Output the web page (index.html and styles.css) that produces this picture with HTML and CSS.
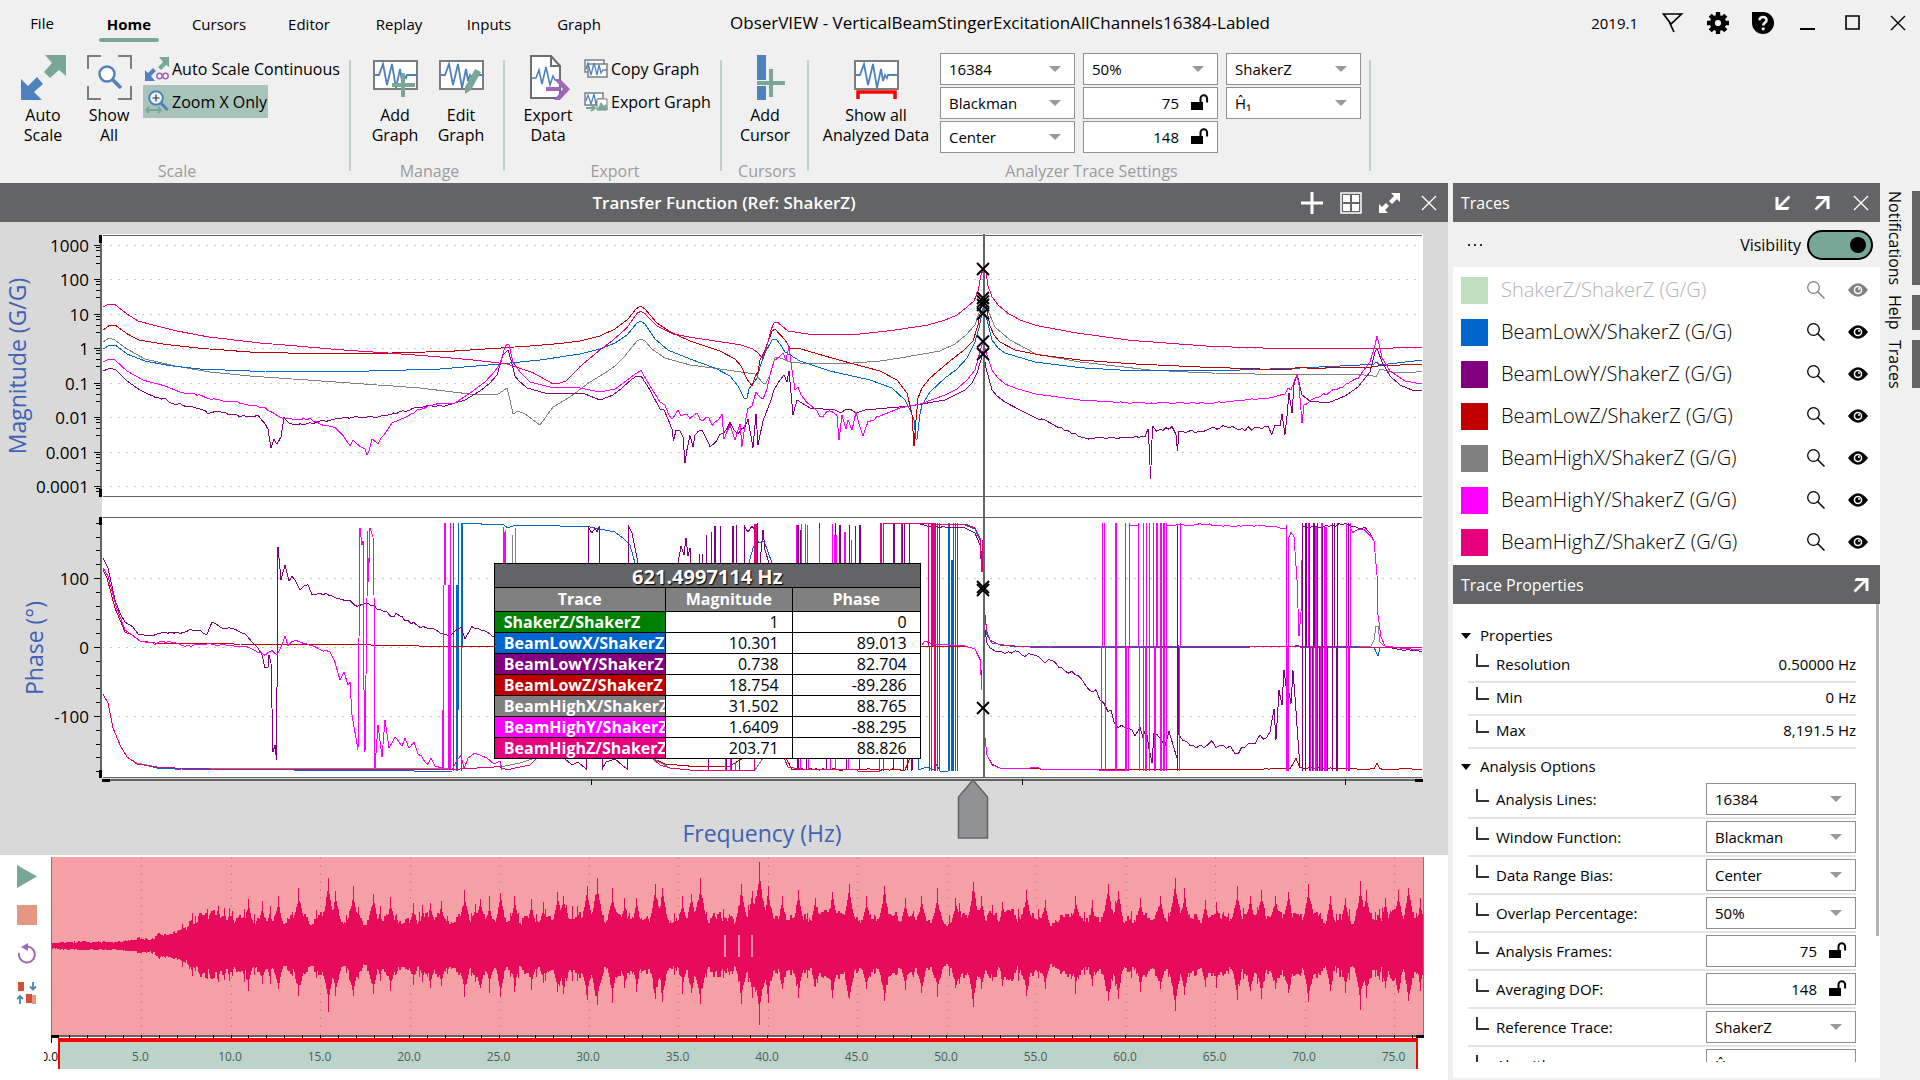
FILE: index.html
```html
<!DOCTYPE html>
<html lang="en">
<head>
<meta charset="utf-8">
<title>ObserVIEW - VerticalBeamStingerExcitationAllChannels16384-Labled</title>
<link rel="stylesheet" href="styles.css">
</head>
<body>
<svg class="symbols" aria-hidden="true">
  <symbol id="i-close" viewBox="0 0 16 16"><path d="M1 1 15 15M15 1 1 15" fill="none" stroke="currentColor" stroke-width="1.4"/></symbol>
  <symbol id="i-out" viewBox="0 0 16 16"><path d="M1.500 14.500 12.500 3.500" stroke="currentColor" stroke-width="2.600" fill="none"/><path d="M3 1h12.500v13h-3V4H1.500z" fill="currentColor"/></symbol>
  <symbol id="i-in" viewBox="0 0 16 16"><path d="M14.500 1.500 3.500 12.500" stroke="currentColor" stroke-width="2.600" fill="none"/><path d="M.5 2h3v10h11L13 15H.5z" fill="currentColor"/></symbol>
  <symbol id="i-search" viewBox="0 0 20 20"><circle cx="7.500" cy="7.500" r="5.800" fill="none" stroke="currentColor" stroke-width="1.300"/><path d="m11.500 11.500 7 7" stroke="currentColor" stroke-width="1.500"/></symbol>
  <symbol id="i-eye" viewBox="0 0 20 14"><path d="M0 7Q10-6.500 20 7 10 20.500 0 7z" fill="currentColor"/><circle cx="10" cy="7" r="4.300" fill="#fff"/><circle cx="10" cy="7" r="2.800" fill="currentColor"/><circle cx="11" cy="6" r="1" fill="#fff"/></symbol>
  <symbol id="i-lock" viewBox="0 0 18 17"><path d="M0 8h12v8H0z" fill="currentColor"/><path d="M9.500 8V4.500a3.300 3.300 0 0 1 6.600 0V8.500" fill="none" stroke="currentColor" stroke-width="2"/></symbol>
  <symbol id="i-wave" viewBox="0 0 45 30"><path d="M1 1h43v28H1z" fill="#fff" stroke="#7b7d80" stroke-width="2"/><path d="M2 15h4l4-11 4 21 5-21 4 24 4-19 2 12 2-6 2 3 1-3h10" fill="none" stroke="#4f81bd" stroke-width="1.800"/></symbol>
</svg>

<div class="app">
  <header class="ribbon">
    <div class="titlebar">
      <nav class="tabs">
        <button class="tab tab-file">File</button><button class="tab active">Home</button><button class="tab">Cursors</button><button class="tab">Editor</button><button class="tab">Replay</button><button class="tab">Inputs</button><button class="tab">Graph</button>
      </nav>
      <h1 class="title">ObserVIEW - VerticalBeamStingerExcitationAllChannels16384-Labled</h1>
      <div class="window-tools">
        <span class="version">2019.1</span>
        <button class="win" aria-label="Feedback"><svg width="22" height="20" viewBox="0 0 22 20"><path d="M1.500 1h18L9 11zM7.500 9.500 12 19" fill="none" stroke="#000" stroke-width="1.700"/></svg></button>
        <button class="win" aria-label="Settings"><svg width="22" height="22" viewBox="-11 -11 22 22"><circle r="5.600" fill="none" stroke="#000" stroke-width="5"/><g stroke="#000" stroke-width="4.400"><path d="M0-11v4M0 11V7M-11 0h4M11 0H7M-7.800-7.800-5-5M7.800 7.800 5 5M-7.800 7.800-5 5M7.800-7.800 5-5"/></g></svg></button>
        <button class="win" aria-label="Help"><svg width="22" height="22" viewBox="0 0 22 22"><path d="M0 0h11a11 11 0 1 1-11 11z"/><path d="M7.500 8.300c0-4.600 7.200-4.300 7 0-.1 2.500-3.300 2.500-3.300 5.200" fill="none" stroke="#f0f0f0" stroke-width="2.600"/><circle cx="11.200" cy="16.800" r="1.600" fill="#f0f0f0"/></svg></button>
        <button class="win" aria-label="Minimize"><svg width="16" height="16"><path d="M0 14h15" stroke="#000" stroke-width="2"/></svg></button>
        <button class="win" aria-label="Maximize"><svg width="16" height="16"><path d="M1 1h13v13H1z" fill="none" stroke="#000" stroke-width="1.600"/></svg></button>
        <button class="win" aria-label="Close"><svg width="16" height="16"><use href="#i-close"/></svg></button>
      </div>
    </div>

    <div class="groups">
      <section class="group g-scale">
        <div class="tools">
          <button class="big"><svg width="45" height="45" viewBox="0 0 45 45"><path d="M24 0h21v21l-7-6-9 8-6-6 8-9z" fill="#79a797"/><path d="M0 24l7 7 9-9 6 7-9 8 8 8H0z" fill="#4f81bd"/></svg><span>Auto<br>Scale</span></button>
          <button class="big"><svg width="45" height="45" viewBox="0 0 45 45"><path d="M1 14V1h13M31 1h13v13M44 31v13H31M14 44H1V31" fill="none" stroke="#7b7d80" stroke-width="2"/><circle cx="20" cy="19" r="7.500" fill="#fff" stroke="#4f81bd" stroke-width="2.400"/><path d="m25 24 9 9" stroke="#4f81bd" stroke-width="3.600"/></svg><span>Show<br>All</span></button>
          <div class="stack">
            <button class="small"><svg width="24" height="24" viewBox="0 0 24 24"><path d="M14 0h10v10l-3-2-5 5-3-3 5-5z" fill="#79a797"/><path d="M0 13l3 3 5-5 3 3-5 5 4 5H0z" fill="#4f81bd"/><circle cx="14.500" cy="19" r="2.700" fill="none" stroke="#a066b8" stroke-width="1.500"/><circle cx="20.500" cy="19" r="2.700" fill="none" stroke="#a066b8" stroke-width="1.500"/></svg>Auto Scale Continuous</button>
            <button class="small pressed"><svg width="24" height="24" viewBox="0 0 24 24"><circle cx="11" cy="8" r="6.800" fill="#eef4f8" stroke="#4f81bd" stroke-width="2"/><path d="M11 4.500v7M7.500 8h7" stroke="#333" stroke-width="1.200"/><path d="m16 13 6.500 7" stroke="#4f81bd" stroke-width="3"/><path d="M1 20h15M4 17l-3 3 3 3M13 17l3 3-3 3" fill="none" stroke="#79a797" stroke-width="1.800"/></svg>Zoom X Only</button>
          </div>
        </div>
        <h2>Scale</h2>
      </section>
      <section class="group g-manage">
        <div class="tools">
          <button class="big"><svg width="45" height="45" viewBox="0 0 45 45"><use href="#i-wave" y="5" width="45" height="30"/><path d="M30 18v24M19 30h23" stroke="#79a797" stroke-width="4"/></svg><span>Add<br>Graph</span></button>
          <button class="big"><svg width="45" height="45" viewBox="0 0 45 45"><use href="#i-wave" y="5" width="45" height="30"/><path d="m26 32 10-18 6 3-10 18-6 4z" fill="#79a797"/></svg><span>Edit<br>Graph</span></button>
        </div>
        <h2>Manage</h2>
      </section>
      <section class="group g-export">
        <div class="tools">
          <button class="big"><svg width="45" height="45" viewBox="0 0 45 45"><path d="M5 1h20l9 10v32H5z" fill="#fff" stroke="#6b6d70" stroke-width="2"/><path d="M25 1v10h9" fill="none" stroke="#6b6d70" stroke-width="2"/><path d="M6 23h4l3-8 3 14 4-17 4 18 3-9 2 4h4" fill="none" stroke="#4f81bd" stroke-width="1.600"/><path d="M20 32h14v4H20z" fill="#a066b8"/><path d="M28 24h6l10 10-10 11h-6l9-11z" fill="#a066b8"/></svg><span>Export<br>Data</span></button>
          <div class="stack">
            <button class="small"><svg width="24" height="20" viewBox="0 0 24 20"><path d="M1 1h19v12H1z" fill="#fff" stroke="#7b7d80" stroke-width="1.500"/><path d="M4 5h19v13H4z" fill="#fff" stroke="#7b7d80" stroke-width="1.500"/><path d="M2 10l2-6 3 12 3-12 3 12 2-10 2 8 2-3h4" fill="none" stroke="#4f81bd" stroke-width="1.300"/></svg>Copy Graph</button>
            <button class="small"><svg width="24" height="20" viewBox="0 0 24 20"><path d="M1 1h18v12H1z" fill="#fff" stroke="#7b7d80" stroke-width="1.500"/><path d="M2 9l2-6 3 9 3-10 2 10 2-5h4" fill="none" stroke="#4f81bd" stroke-width="1.300"/><path d="M13 7h10v11H13z" fill="#fff" stroke="#7b7d80"/><path d="m13 18 4-8 3 4 2-2 2 6z" fill="#79a797"/><path d="M2 16h8M7 13l4 3-4 3" fill="none" stroke="#79a797" stroke-width="1.800"/></svg>Export Graph</button>
          </div>
        </div>
        <h2>Export</h2>
      </section>
      <section class="group g-cursors">
        <div class="tools">
          <button class="big"><svg width="45" height="45" viewBox="0 0 45 45"><path d="M14 0h9v25h-9zM14 31h9v14h-9z" fill="#4f81bd"/><path d="M28 14v28M14 28h28" stroke="#79a797" stroke-width="4"/></svg><span>Add<br>Cursor</span></button>
        </div>
        <h2>Cursors</h2>
      </section>
      <section class="group g-analyzer">
        <div class="tools">
          <button class="big wide"><svg width="45" height="45" viewBox="0 0 45 45"><use href="#i-wave" y="5" width="45" height="30"/><path d="M4 44v-7h37v7" fill="none" stroke="red" stroke-width="3.500"/></svg><span>Show all<br>Analyzed Data</span></button>
          <div class="settings">
            <span class="combo"><select aria-label="Analysis lines"><option>16384</option></select></span>
            <span class="combo"><select aria-label="Overlap"><option>50%</option></select></span>
            <span class="combo"><select aria-label="Reference trace"><option>ShakerZ</option></select></span>
            <span class="combo"><select aria-label="Window function"><option>Blackman</option></select></span>
            <span class="locked"><input aria-label="Analysis frames" value="75"><button aria-label="Unlock frames"><svg width="18" height="17"><use href="#i-lock"/></svg></button></span>
            <span class="combo"><select aria-label="Algorithm"><option>Ĥ₁</option></select></span>
            <span class="combo"><select aria-label="Data range bias"><option>Center</option></select></span>
            <span class="locked"><input aria-label="Averaging DOF" value="148"><button aria-label="Unlock DOF"><svg width="18" height="17"><use href="#i-lock"/></svg></button></span>
          </div>
        </div>
        <h2>Analyzer Trace Settings</h2>
      </section>
    </div>
  </header>

  <main class="workspace">
    <div class="panel-head graph-head">
      <h2>Transfer Function (Ref: ShakerZ)</h2>
      <div class="head-tools">
        <button aria-label="Add"><svg width="22" height="22"><path d="M11 0v22M0 11h22" stroke="#fff" stroke-width="3"/></svg></button>
        <button aria-label="Layout"><svg width="22" height="22"><path d="M1 1h20v20H1z" fill="none" stroke="#fff" stroke-width="1.500"/><path d="M3 3h7v7H3zM12 3h7v7h-7zM3 12h7v7H3zM12 12h7v7h-7z" fill="#fff"/></svg></button>
        <button aria-label="Expand"><svg width="22" height="22"><path d="M12 1h9v9l-3-3-5 5-3-3 5-5zM0 12l3 3 4-4 3 3-4 4 3 3H0z" fill="#fff"/></svg></button>
        <button aria-label="Close graph"><svg width="16" height="16"><use href="#i-close"/></svg></button>
      </div>
    </div>

    <div class="chart">
      <svg id="chart" viewBox="0 222 1448 633" role="img" aria-label="Transfer function magnitude and phase"></svg>
      <table class="readout">
        <colgroup><col class="col-trace"><col class="col-mag"><col class="col-phase"></colgroup>
        <thead>
          <tr class="freq"><th colspan="3">621.4997114 Hz</th></tr>
          <tr class="cols"><th>Trace</th><th>Magnitude</th><th>Phase</th></tr>
        </thead>
        <tbody>
          <tr><th class="c-ref">ShakerZ/ShakerZ</th><td>1</td><td>0</td></tr>
          <tr><th class="c-lowx">BeamLowX/ShakerZ</th><td>10.301</td><td>89.013</td></tr>
          <tr><th class="c-lowy">BeamLowY/ShakerZ</th><td>0.738</td><td>82.704</td></tr>
          <tr><th class="c-lowz">BeamLowZ/ShakerZ</th><td>18.754</td><td>-89.286</td></tr>
          <tr><th class="c-highx">BeamHighX/ShakerZ</th><td>31.502</td><td>88.765</td></tr>
          <tr><th class="c-highy">BeamHighY/ShakerZ</th><td>1.6409</td><td>-88.295</td></tr>
          <tr><th class="c-highz">BeamHighZ/ShakerZ</th><td>203.71</td><td>88.826</td></tr>
        </tbody>
      </table>
    </div>

    <div class="recording">
      <div class="transport">
        <button aria-label="Play"><svg width="20" height="23"><path d="M0 0 20 11.500 0 23z" fill="#79a797"/></svg></button>
        <button aria-label="Stop"><svg width="20" height="20"><path d="M0 0h20v20H0z" fill="#e69783"/></svg></button>
        <button aria-label="Loop"><svg width="20" height="22" viewBox="0 0 20 22"><path d="M2 10a8 8 0 1 0 8-6.500" fill="none" stroke="#a066b8" stroke-width="2"/><path d="m4 4 7-4v8z" fill="#a066b8"/></svg></button>
        <button aria-label="Swap"><svg width="20" height="22" viewBox="0 0 20 22"><path d="M1 0h6v9H1zM9 12h6v9H9z" fill="#d0503a"/><path d="M15 13h4v9h-4z" fill="#e69783"/><path d="M16 0v7M13 4.500l3 3 3-3M3 22v-8M0 17l3-3 3 3" fill="none" stroke="#4f81bd" stroke-width="1.800"/></svg></button>
      </div>
      <svg id="waveform" viewBox="44 855 1404 225" role="img" aria-label="Recorded time waveform"></svg>
    </div>
  </main>

  <aside class="side">
    <div class="panel-head">
      <h2>Traces</h2>
      <div class="head-tools">
        <button aria-label="Dock traces"><svg width="16" height="16"><use href="#i-in"/></svg></button>
        <button aria-label="Pop out traces"><svg width="16" height="16"><use href="#i-out"/></svg></button>
        <button aria-label="Close traces"><svg width="16" height="16"><use href="#i-close"/></svg></button>
      </div>
    </div>
    <div class="visibility">
      <button class="more" aria-label="More"><i></i><i></i><i></i></button>
      <label for="vis">Visibility</label><input id="vis" type="checkbox" class="toggle" checked>
    </div>
    <ul class="traces">
      <li class="off"><i class="swatch c-ref"></i><span>ShakerZ/ShakerZ (G/G)</span><button aria-label="Find"><svg width="20" height="20"><use href="#i-search"/></svg></button><button aria-label="Show"><svg width="20" height="14"><use href="#i-eye"/></svg></button></li>
      <li><i class="swatch c-lowx"></i><span>BeamLowX/ShakerZ (G/G)</span><button aria-label="Find"><svg width="20" height="20"><use href="#i-search"/></svg></button><button aria-label="Hide"><svg width="20" height="14"><use href="#i-eye"/></svg></button></li>
      <li><i class="swatch c-lowy"></i><span>BeamLowY/ShakerZ (G/G)</span><button aria-label="Find"><svg width="20" height="20"><use href="#i-search"/></svg></button><button aria-label="Hide"><svg width="20" height="14"><use href="#i-eye"/></svg></button></li>
      <li><i class="swatch c-lowz"></i><span>BeamLowZ/ShakerZ (G/G)</span><button aria-label="Find"><svg width="20" height="20"><use href="#i-search"/></svg></button><button aria-label="Hide"><svg width="20" height="14"><use href="#i-eye"/></svg></button></li>
      <li><i class="swatch c-highx"></i><span>BeamHighX/ShakerZ (G/G)</span><button aria-label="Find"><svg width="20" height="20"><use href="#i-search"/></svg></button><button aria-label="Hide"><svg width="20" height="14"><use href="#i-eye"/></svg></button></li>
      <li><i class="swatch c-highy"></i><span>BeamHighY/ShakerZ (G/G)</span><button aria-label="Find"><svg width="20" height="20"><use href="#i-search"/></svg></button><button aria-label="Hide"><svg width="20" height="14"><use href="#i-eye"/></svg></button></li>
      <li><i class="swatch c-highz"></i><span>BeamHighZ/ShakerZ (G/G)</span><button aria-label="Find"><svg width="20" height="20"><use href="#i-search"/></svg></button><button aria-label="Hide"><svg width="20" height="14"><use href="#i-eye"/></svg></button></li>
    </ul>
    <div class="panel-head">
      <h2>Trace Properties</h2>
      <div class="head-tools"><button aria-label="Pop out properties"><svg width="16" height="16"><use href="#i-out"/></svg></button></div>
    </div>
    <div class="props">
      <div class="props-scroll">
        <h3>Properties</h3>
        <div class="row"><span class="name">Resolution</span><span>0.50000 Hz</span></div>
        <div class="row"><span class="name">Min</span><span>0 Hz</span></div>
        <div class="row"><span class="name">Max</span><span>8,191.5 Hz</span></div>
        <h3>Analysis Options</h3>
        <div class="row field"><label class="name" for="p1">Analysis Lines:</label><span class="combo"><select id="p1"><option>16384</option></select></span></div>
        <div class="row field"><label class="name" for="p2">Window Function:</label><span class="combo"><select id="p2"><option>Blackman</option></select></span></div>
        <div class="row field"><label class="name" for="p3">Data Range Bias:</label><span class="combo"><select id="p3"><option>Center</option></select></span></div>
        <div class="row field"><label class="name" for="p4">Overlap Percentage:</label><span class="combo"><select id="p4"><option>50%</option></select></span></div>
        <div class="row field"><label class="name" for="p5">Analysis Frames:</label><span class="locked"><input id="p5" value="75"><button aria-label="Unlock"><svg width="18" height="17"><use href="#i-lock"/></svg></button></span></div>
        <div class="row field"><label class="name" for="p6">Averaging DOF:</label><span class="locked"><input id="p6" value="148"><button aria-label="Unlock"><svg width="18" height="17"><use href="#i-lock"/></svg></button></span></div>
        <div class="row field"><label class="name" for="p7">Reference Trace:</label><span class="combo"><select id="p7"><option>ShakerZ</option></select></span></div>
        <div class="row field"><label class="name" for="p8">Algorithm</label><span class="combo"><select id="p8"><option>Ĥ₁</option></select></span></div>
      </div>
      <div class="scrollbar"></div>
    </div>
  </aside>

  <nav class="dock">
    <button>Notifications</button>
    <button>Help</button>
    <button>Traces</button>
  </nav>
</div>
<script src="script.js"></script>
</body>
</html>
```
FILE: styles.css
```css
* { box-sizing: border-box; }
body {
  margin: 0;
  font: 15px/20px "Open Sans", "Noto Sans", sans-serif;
  color: #000;
  background: #f0f0f0;
}
h1, h2, h3, ul { margin: 0; padding: 0; font-size: inherit; font-weight: 400; list-style: none; }
button, input, select { font: inherit; color: inherit; margin: 0; padding: 0; border: 0; background: none; border-radius: 0; }
svg { display: block; flex: none; }
.symbols { position: absolute; width: 0; height: 0; }

.app {
  display: grid;
  grid-template-columns: minmax(0, 1fr) 427px 40px;
  grid-template-rows: auto minmax(0, 1fr);
  height: 100vh;
  overflow: hidden;
}

/* ribbon */
.ribbon { grid-column: 1 / -1; height: 183px; }
.titlebar { display: flex; align-items: center; height: 46px; }
.title { font-size: 17px; padding-left: 80px; }
.tabs { display: flex; flex: 1; }
.tab { width: 90px; height: 46px; padding-top: 1px; }
.tab-file { width: 84px; padding-top: 0; }
.tab.active { font-weight: 700; position: relative; }
.tab.active::after {
  content: ""; position: absolute; left: 15px; right: 15px; bottom: 4px;
  height: 4px; border-radius: 2px; background: #79a797;
}
.window-tools { flex: 1; display: flex; align-items: center; justify-content: flex-end; }
.version { margin-right: 12px; }
.win { width: 45px; height: 44px; display: grid; place-items: center; }

.groups { display: flex; height: 137px; }
.group { display: flex; flex-direction: column; position: relative; height: 137px; }
.group::after { content: ""; position: absolute; right: 0; top: 14px; bottom: 12px; width: 2px; background: #bcd3ca; }
.group h2 { font-size: 16px; margin-top: auto; margin-bottom: 2px; padding-left: 3px; text-align: center; color: #9b9b9b; }
.tools { display: flex; align-items: flex-start; padding-left: 10px; }
.g-scale { width: 351px; }
.g-manage { width: 154px; }
.g-export { width: 217px; }
.g-cursors { width: 87px; }
.g-analyzer { width: 562px; }
.g-manage .tools, .g-analyzer .tools { padding-left: 11px; }
.big { width: 66px; display: flex; flex-direction: column; align-items: center; gap: 5px; padding-top: 9px; font-size: 16px; }
.big.wide { width: 112px; }
.stack { display: flex; flex-direction: column; align-items: flex-start; padding: 6px 0 0 1px; white-space: nowrap; font-size: 16px; }
.small { display: flex; align-items: center; gap: 3px; height: 33px; padding: 0 1px 0 2px; }
.small.pressed { background: #a8c4ba; }
.settings { display: grid; grid-template-columns: repeat(3, 135px); gap: 2px 8px; padding: 7px 0 0 8px; }

.combo, .locked { display: flex; position: relative; height: 32px; background: #fff; border: 1px solid #8f9092; }
.combo select { appearance: none; width: 100%; padding: 0 30px 0 8px; outline: 0; }
.combo::after {
  content: ""; position: absolute; right: 13px; top: 12px; pointer-events: none;
  border: 6px solid transparent; border-top: 6px solid #999; border-bottom: 0;
}
.locked input { flex: 1; width: 0; text-align: right; outline: 0; }
.locked button { width: 38px; padding: 0 0 2px 12px; }

/* panel headers */
.panel-head { display: flex; align-items: center; height: 39px; flex: none; background: #636466; color: #fff; font-size: 16px; }
.panel-head h2 { flex: 1; padding-left: 8px; }
.head-tools { display: flex; }
.head-tools button { width: 39px; height: 39px; display: grid; place-items: center; }
.graph-head h2 { text-align: center; font-size: 17px; font-weight: 600; padding-left: 156px; }

/* graph */
.workspace { display: flex; flex-direction: column; margin-right: 5px; background: #fff; }
.chart { position: relative; background: #d9d9d9; }
.chart > svg { width: 100%; height: auto; }
.tick { font-size: 17px; }
.axis-title { font-size: 23px; fill: #3e62b5; }
.time { font-size: 12px; fill: #4c5f57; }
.time-zero { fill: #000; }

.readout {
  position: absolute; left: 34.1%; top: 53.8%; width: 427px; font-size: 16px;
  border-collapse: collapse; table-layout: fixed; background: #fff;
}
.col-trace { width: 171px; }
.col-mag { width: 127px; }
.col-phase { width: 128px; }
.readout th, .readout td { border: 1px solid #000; padding: 0; height: 21px; line-height: 20px; overflow: hidden; white-space: nowrap; }
.readout .cols th { height: 24px; background: #808080; color: #fff; }
.readout .freq th { height: 24px; padding-top: 3px; background: #636466; color: #fff; font-size: 20px; text-shadow: 1px 1px 1px #000; overflow: visible; }
.readout tbody th { color: #fff; text-align: left; padding-left: 9px; }
.readout td { text-align: right; padding-right: 13px; }

.c-ref { background: #008000; }
.c-lowx { background: #0066cc; }
.c-lowy { background: #800080; }
.c-lowz { background: #c00000; }
.c-highx { background: #808080; }
.c-highy { background: #ff00ff; }
.c-highz { background: #e6007e; }

.recording { display: flex; }
.transport { width: 44px; flex: none; display: flex; flex-direction: column; align-items: center; padding: 9px 0 0 9px; }
.transport button { width: 24px; height: 39px; display: grid; place-items: center; padding-bottom: 15px; }
#waveform { flex: 1; min-width: 0; height: auto; }

/* side panel */
.side { display: flex; flex-direction: column; min-height: 0; }
.visibility { display: flex; align-items: center; height: 45px; padding: 0 7px 0 15px; font-size: 16px; }
.more { display: flex; gap: 4px; margin-right: auto; }
.more i { width: 2px; height: 2px; background: #333; }
.toggle {
  appearance: none; width: 66px; height: 30px; margin-left: 6px;
  border: 2px solid #000; border-radius: 15px; background: #79a797; position: relative;
}
.toggle::after { content: ""; position: absolute; right: 5px; top: 5px; width: 16px; height: 16px; border-radius: 8px; background: #000; }
.traces { background: #fff; padding: 2px 0; }
.traces li { display: flex; align-items: center; height: 42px; padding: 0 1px 0 8px; font-size: 20px; font-weight: 300; }
.traces span { flex: 1; padding-left: 13px; }
.traces button { width: 42px; height: 42px; display: grid; place-items: center; }
.swatch { width: 27px; height: 27px; }
.traces .off { color: #b4b4b4; }
.traces .off .swatch { opacity: .25; }
.traces .off button { color: #808080; }

.props { flex: 1; min-height: 0; display: flex; background: #fff; padding-bottom: 16px; margin-bottom: 2px; }
.props-scroll { flex: 1; overflow: hidden; padding: 16px 20px 0 15px; }
.props h3 { position: relative; height: 30px; line-height: 30px; padding-left: 12px; }
.props .row + h3 { margin-top: 2px; }
.props h3::before {
  content: ""; position: absolute; left: -7px; top: 13px;
  border: 5px solid transparent; border-top: 6px solid #000; border-bottom: 0;
}
.row { display: flex; justify-content: space-between; align-items: center; height: 33px; padding-bottom: 3px; border-bottom: 2px solid #e5e5e5; }
.row.field { height: 38px; padding-bottom: 0; }
.row .combo, .row .locked { width: 150px; }
.name { display: flex; }
.name::before {
  content: ""; width: 11px; height: 11px; margin: 0 7px 0 8px;
  border: solid #333; border-width: 0 0 2px 2px;
}
.scrollbar { width: 3px; height: 332px; margin-right: 1px; background: #b4b4b4; }

/* dock tabs on the right edge */
.dock { display: flex; flex-direction: column; align-items: flex-end; gap: 10px; padding-top: 8px; font-size: 16px; }
.dock button { writing-mode: vertical-rl; border-right: 8px solid #636466; padding-right: 7px; }
```
FILE: script.js
```js
(() => {
const NS = 'http://www.w3.org/2000/svg';
const chart = document.getElementById('chart');
const wave = document.getElementById('waveform');

function add(parent, tag, attrs, text) {
  const el = document.createElementNS(NS, tag);
  for (const k in attrs) el.setAttribute(k, attrs[k]);
  if (text) el.textContent = text;
  parent.appendChild(el);
  return el;
}
function rect(p, x, y, w, h, fill) { add(p, 'rect', { x, y, width: w, height: h, fill }); }
function path(p, d, stroke, width, extra) {
  add(p, 'path', Object.assign({ d, stroke, 'stroke-width': width || 1, fill: 'none', 'shape-rendering': 'crispEdges' }, extra));
}
let seed = 7;
function rnd() {
  seed = (seed * 1664525 + 1013904223) % 4294967296;
  return seed / 4294967296;
}

const C = { lowX: '#0066cc', lowY: '#800080', lowZ: '#c00000', highX: '#808080', highY: '#ff00ff', highZ: '#e6007e' };

/* plot areas */
rect(chart, 102, 234, 1321, 544, '#fff');
path(chart, 'M103 235.5H1422M103 496.5H1422M103 517.500H1422M103 777.500H1422', '#636466');
for (let i = 0; i < 8; i++) {
  const y = Math.round(245 + i * 34.45) + 0.5;
  path(chart, `M103 ${y}H1420`, '#c8c8c8', 1, { 'stroke-dasharray': '2 6', 'stroke-dashoffset': 1 });
  path(chart, `M94 ${y}H101`, '#000');
  add(chart, 'text', { x: 89, y: y + 6, 'text-anchor': 'end', class: 'tick' }, ['1000', '100', '10', '1', '0.1', '0.01', '0.001', '0.0001'][i]);
  const offs = i < 7 ? [2, 5, 11, 18] : [2, 5];
  offs.forEach(o => path(chart, `M96 ${y + o}H101`, '#000'));
}
[[100, 578.5], [0, 647.5], [-100, 716.5]].forEach(([v, y]) => {
  path(chart, `M103 ${y}H1420`, '#c8c8c8', 1, { 'stroke-dasharray': '2 6', 'stroke-dashoffset': 1 });
  path(chart, `M94 ${y}H101`, '#000');
  add(chart, 'text', { x: 89, y: y + 6, 'text-anchor': 'end', class: 'tick' }, String(v));
});
for (let v = -9; v <= 9; v++) path(chart, `M96 ${Math.round(647 - v * 13.8) + 0.5}H101`, '#000');
rect(chart, 100, 235, 2, 262, '#636466');
rect(chart, 99, 235, 3, 8, '#000');
rect(chart, 99, 489, 3, 8, '#000');
rect(chart, 100, 517, 2, 261, '#636466');
rect(chart, 99, 517, 3, 8, '#000');
rect(chart, 99, 770, 3, 8, '#000');
rect(chart, 102, 779, 1321, 2, '#636466');
rect(chart, 102, 779, 8, 3, '#000');
rect(chart, 1415, 779, 8, 3, '#000');
[591, 1022, 1345].forEach(x => rect(chart, x, 779, 1, 6, '#000'));

add(chart, 'text', { x: 0, y: 0, transform: 'translate(26 366) rotate(-90)', 'text-anchor': 'middle', class: 'axis-title' }, 'Magnitude (G/G)');
add(chart, 'text', { x: 0, y: 0, transform: 'translate(43 648) rotate(-90)', 'text-anchor': 'middle', class: 'axis-title' }, 'Phase (°)');
add(chart, 'text', { x: 762, y: 842, 'text-anchor': 'middle', class: 'axis-title' }, 'Frequency (Hz)');

/* "x,y x,y ..." samples joined by straight segments; noisy spans get jitter [from, to, amplitude] */
function trace(data, color, noise) {
  const pts = data.trim().split(/\s+/).map(p => p.split(',').map(Number));
  const out = [pts[0]];
  for (let i = 1; i < pts.length; i++) {
    const [x0, y0] = pts[i - 1], [x1, y1] = pts[i];
    const n = Math.max(1, Math.floor((x1 - x0) / 3));
    for (let k = 1; k <= n; k++) {
      const x = x0 + (x1 - x0) * k / n;
      let y = y0 + (y1 - y0) * k / n;
      (noise || []).forEach(([a, b, amp]) => { if (x > a && x < b) y += (rnd() - 0.5) * 2 * amp; });
      out.push([x, y]);
    }
  }
  path(chart, 'M' + out.map(p => p[0].toFixed(1) + ' ' + p[1].toFixed(1)).join('L'), color);
}
function bars(color, list) {
  list.forEach(([x, y0, y1, w]) => rect(chart, x, y0, w || 1, y1 - y0, color));
}

/* magnitude */
trace(`103,342 109,338 115,340 127,349 145,359 175,366 210,372 250,376 350,383 420,388 470,394 498,394 503,391 507,388 510,400 513,414 518,411 525,414 540,425 553,407 570,397 590,382 605,373 615,366 624,357 632,347 637,341 641,339 645,341 652,349 665,358 690,365 720,369 755,374 763,383 766,383 770,375 775,358 778,357 790,362 800,363 840,364 880,361 900,358 940,351 955,344 966,335 975,325 979,313 983,297 987,308 995,327 1010,340 1025,348 1036,354 1080,362 1150,370 1200,372.7 1270,374.3 1370,375 1376,377 1380,369 1395,373 1422,371.7`, C.highX);
trace(`103,349 110,345 116,345.7 127,354 145,361 170,365.7 200,369 250,371 360,371.3 440,369 500,364 540,360 580,354 600,349 615,343 627,335 637,323 641,321 645,324 655,339 668,350 690,359 715,368 730,376 738,386 744,398 747,398 749,389 757,378 760,367 765,353 772,340 776,339 780,344 785,352 800,361 830,371 870,380 892,388 905,400 911,412 914,420 916,439 917,439 920,414 922,405 930,392 945,378 957,369 967,358 975,342 979,328 983,308 987,320 992,340 998,348 1005,353 1035,362 1080,367.7 1120,370 1240,370 1300,368 1360,365 1374,364 1376,362 1380,365 1422,360`, C.lowX);
trace(`103,330 110,325 115,325 127,333.7 139,340 165,344.3 200,348.3 250,352 300,353.3 380,353.3 450,351.3 490,348.7 530,346 560,343.500 580,341 600,336 615,329 628,319 636,309 641,306 645,309 657,323 670,331.7 690,341 720,351 735,359 741,366 747,379 752,386 755,377 758,372 760,360 765,350 772,331 775,329 785,340 790,348 800,348.7 825,356 850,363 880,371 897,380 907,393 911,410 912,415 914,446 916,420 918,398 922,388 930,378 950,361 964,350 973,341 978,325 981,308 983,300 986,305 990,326 994,335 1000,342 1015,350 1040,355 1080,360 1130,363.7 1200,367 1290,370 1297,367 1310,368.3 1372,367 1378,366 1422,364`, C.lowZ);
trace(`103,371 110,368.3 116,370 127,381 140,390 152,396 165,399 176,406 180,404 205,410 208,414 215,411 240,416 255,417 258,415 262,420 268,429 271,447 274,440 277,444 281,437 284,418 289,423 297,425 310,423 330,420 355,417 375,417 400,412 425,406 445,406 465,400 480,391 490,383 497,375 503,355 508,350 511,360 515,376 518,380 527,388 545,393 585,394 600,400 613,395 622,388 632,379 637,376 641,376 650,390 660,409 664,410 668,420 672,430 673.500,443 676,428 683,436 685,462 687,450 690,437 693,447 695,436 702,431 710,445 720,436 730,425 738,432 748,422 753,446 756,414 758,442 763,421 771,400 774,390 780,380 784,375 787,382 789,371 793,415 797,400 810,408 835,410 841,413 846,409 850,409 856,413 865,410 910,406 945,400 965,390 972,383 977,373 981,360 983,351 986,368 992,390 997,396 1005,402 1020,410 1036,418 1048,421 1065,430 1088,439 1115,438 1145,437 1148,430 1149.500,450 1150.500,478 1152,440 1153,428 1160,431 1172,427 1176,434 1177.500,451 1179,432 1195,432 1220,427 1245,429 1265,427 1275,430 1280,428 1282,420 1285,434 1287,420 1289,393 1292,413 1294,385 1297,374 1302,395 1310,401 1328,403 1345,396 1358,387 1370,372 1375,352 1377,348 1382,362 1390,376 1400,385 1412,390 1422,390`, C.lowY,
  [[150, 440, 1], [664, 760, 3], [1036, 1140, 1], [1140, 1270, 1.8], [1270, 1288, 6]]);
trace(`103,362 108,359.3 115,360 127,371 143,380 165,386 180,392 200,395 205,398 235,402 265,408 275,414 285,419 310,419 320,424 335,427 343,436 350,446 353,440 360,446 365,449 367,455 369,451 372,439 378,443 392,423 405,418 420,409 435,404 455,403 470,393 485,382 495,371 500,364 505,347 507,344 509,345 513,362 520,372 530,382 550,387 580,388 600,392 615,389 630,378 635,374 641,370.5 650,386 660,402 665,405 672,420 678,412 690,419 697,413 703,422 706,416 712,425 722,416 724,441 730,423 735,438 740,425 742,447 746,420 748,410 752,405 756,390 763,399 767,389 770,375 774,361 780,356 783,353 786,360 789,346 792,370 795,390 798,386 804,400 810,404 820,416 830,411 837,416 839,442 842,416 846,430 848,418 852,432 856,413 863,436 868,422 880,416 900,408 920,404 945,395 957,389 967,380 975,370 980,352 983,341 987,355 992,370 997,377 1005,384 1018,389 1036,394 1080,400 1130,403 1210,403 1270,398 1285,394 1288,388 1291,390 1297,374 1299,385 1302,423 1304,405 1320,396 1340,388 1358,378 1370,362 1375,345 1377,336 1380,348 1382,358 1390,371 1405,381 1422,384`, C.highY,
  [[180, 440, 0.8], [665, 760, 3], [796, 880, 2], [1080, 1290, 0.6], [1304, 1360, 1.6]]);
trace(`103,307 108,304.6 115,304.6 127,314 138,321 153,325 177,331 207,336.7 257,342.7 300,346.3 347,350.3 383,352.7 433,356.3 480,360.7 507,364 533,372.7 552,383.3 558,383.7 566,381 580,366.7 597,352.3 613,340 627,327.7 637,313.3 641,311.3 645,313.7 657,326 673,334 693,337.7 740,344.7 753,349 758,353 762,357.7 765,352 768,341.7 771,330 774,322.7 778,322.7 788,331 810,334.3 857,334.3 893,330.3 927,325.3 945,320 957,315 967,307 974,301 978,291 981,275 983,270 986,272 988,286 992,296.7 998,305 1008,313.3 1020,320 1037,325.7 1077,333 1130,340.3 1210,346.3 1263,348 1393,348 1422,347.3`, C.highZ);

/* phase */
trace('103,694 108,703 113,728 120,745 127,757 137,763 157,768 175,769 300,770 420,771 452,771', C.lowX);
trace('463,523.5 503,524.5 508,528 515,525 560,526 590,527 605,530 615,532 624,539 630,545 635,563', C.lowX);
trace('749,563 753,548 757,540 759,543 764,541 768,552 772,563', C.lowX);
trace('918,759 919,770 926,767 935,770 936,764 940,771 948,771', C.lowX);
trace('940,524 965,525 975,529 980,540 982,562', C.lowX);
trace('985,615 987,635 992,643 1010,646 1250,646.5 1374,647 1376,652 1378,656 1380,648 1422,647', C.lowX);
path(chart, 'M1035 646.500H1250', C.lowX, 2);
bars(C.lowX, [[453, 523, 771], [456, 585, 771, 2], [458, 523, 710], [461, 523, 771], [462, 523, 646], [935, 523, 771], [937, 523, 771], [939, 523, 771], [948, 523, 771, 2], [951, 560, 771, 2], [953, 523, 771], [955, 523, 771], [957, 523, 771]]);
trace('103,570 107,578 115,608 125,632 132,635 140,641 155,643 280,644.5 380,645 440,646.500 500,646.500', C.lowZ);
trace('921,646 965,646 975,649 980,659 982,680', C.lowZ);
trace('985,738 987,755 992,764 1000,768 1040,769 1260,769 1290,769 1296,758 1300,768 1374,769 1377,764 1380,769 1422,769', C.lowZ, [[1260, 1420, 0.5]]);
trace('652,758 665,764 700,767 730,766 743,758', C.lowZ);
trace('786,758 792,769 905,770 910,758', C.lowZ, [[790, 905, 1]]);
trace('103,694 108,703 113,728 120,745 127,757 137,763 157,767 175,768 460,769 494,767 505,766 520,763 535,758', C.highX);
trace('652,758 670,768 690,770 755,770 763,758', C.highX);
trace('1360,646 1371,646 1374,640 1376,626 1378,626 1380,642 1384,646', C.highX);
bars(C.highX, [[505, 530, 564], [512, 535, 564], [515, 528, 564]]);
trace(`103,558 108,568 115,600 120,613 125,622 133,627 138,634 150,636 165,632 180,633 190,630 200,631 207,635 212,622 220,627 235,630 245,633 252,642 258,648 262,655 265,668 268,667 269,655 271,663 273,752 275,745 276.500,760 278,547 281,580 285,565 289,580 292,577 300,589 308,585 312,594 320,593 345,600 360,606 365,603 380,609 394,617 396,614 405,620 420,626 430,627 450,637 461,627 465,638 472,628 485,632 496,637`, C.lowY, [[150, 250, 1], [285, 494, 1.5]]);
trace('588,527 592,533 595,528 597,532 599,527 599,563', C.lowY);
trace('628,525 632,533 635,548 638,563', C.lowY);
trace('678,563 681,546 684,555 686,538 688,556 690,548 691,563', C.lowY);
trace('744,526 748,532 752,526 755,530 757,525', C.lowY);
trace('760,563 763,530 765,550 769,563', C.lowY);
trace('564,758 572,765 578,762 586,769', C.lowY);
trace('602,769 606,762 615,759 622,765 627,769', C.lowY);
trace('920,525 940,527 965,528 975,533 980,545 982,572', C.lowY, [[920, 965, 1]]);
bars(C.lowY, [[586, 758, 770], [588, 526, 564], [599, 526, 564], [602, 758, 770], [627, 758, 770], [628, 525, 564], [699, 554, 564], [702, 554, 564], [706, 535, 564], [711, 532, 564], [714, 526, 564, 2], [720, 526, 564], [732, 526, 564, 2], [736, 525, 564], [744, 525, 564], [757, 523, 564], [797, 525, 564, 2], [800, 530, 564], [819, 523, 564], [835, 523, 564], [839, 525, 564, 2], [849, 525, 564], [855, 526, 564], [859, 525, 564, 2], [893, 523, 564], [894, 523, 564], [902, 523, 564], [904, 523, 564], [907, 758, 770], [912, 758, 770],
  [708, 758, 770], [726, 758, 770], [731, 758, 770], [739, 758, 770], [797, 758, 770, 2], [806, 758, 770], [826, 758, 770], [846, 758, 770], [859, 758, 770], [893, 758, 770], [903, 758, 770]]);
trace(`985,630 987,643 990,648 997,652 1005,653 1015,651 1025,655 1035,655 1045,662 1052,660 1065,672 1075,673 1085,684 1092,693 1096,691 1100,700 1104,704 1108,713 1111,710 1114,722 1118,728 1125,725 1129,728 1135,738 1140,731 1143,740 1146,730 1152,762 1154,730 1157,738 1165,745 1169,735 1173,748 1177,758 1178,645 1179,735 1183,743 1190,746 1200,748 1208,741 1212,740 1216,747 1230,748 1235,752 1245,747 1255,742 1260,738 1270,735 1274,710 1276,735 1279,690 1282,705 1284,668 1286,690 1287,660 1289,690 1291,700 1293,670 1295,700 1298,740 1300,768`, C.lowY, [[1000, 1110, 1.5], [1118, 1175, 4], [1180, 1275, 3.5], [1275, 1296, 5]]);
trace('1303,526 1320,527 1345,524 1352,526 1365,529 1370,533 1374,541 1377,575 1378,615 1381,637 1385,646 1400,650 1422,651', C.lowY, [[1303, 1366, 1.5], [1390, 1422, 0.6]]);
trace(`103,568 108,576 116,606 125,630 140,641 155,644 163,641 175,643 185,646 210,644 225,645 250,648 258,652 265,655 272,650 277,655 281,648 285,636 288,645 296,640 310,645 320,649 330,653 335,662 340,680 344,672 348,685 350,682 352,715 358,750 360,528 362,545 363,541 364,690 365,752 367,600 367.500,531 368.500,582 370,528 373,537 374,595 375,768 378,725 382,757 385,720 389,748 395,736 402,745 405,737 409,747 414,741 418,753 428,765 431,757 435,765 442,768`, C.highY, [[150, 340, 1], [390, 442, 1.500]]);
trace('452,770 456,762 461,755 464,769 468,758 475,753 487,758 494,764 500,761 502,770', C.highY);
bars(C.highY, [[442, 710, 770], [444, 523, 585, 2], [443, 585, 770], [448, 585, 770, 2], [450, 523, 770], [503, 527, 564], [504, 532, 564, 2], [796, 525, 564], [801, 524, 564], [805, 524, 564], [807, 525, 564], [819, 528, 564], [832, 524, 564], [834, 535, 564, 3], [844, 532, 564, 2], [851, 540, 564], [725, 758, 770], [730, 758, 770], [735, 762, 770], [800, 758, 770], [808, 758, 770], [830, 758, 770], [835, 758, 770], [848, 758, 770]]);
trace('922,645 925,641 930,643 935,644 965,646 975,649 980,660 982,690', C.highY);
trace('985,738 987,755 992,765 1000,768 1030,768 1037,767 1041,769 1102,770 1128,770', C.highY);
trace('1129,525 1134,526 1138,525', C.highY);
trace('1166,525 1200,524.500 1235,526 1270,526 1286,529', C.highY, [[1166, 1286, 1]]);
trace('1288,540 1291,532 1294,537 1297,580 1299,636 1301,612 1302,560', C.highY);
trace('1350,527 1353,533 1360,530 1368,532 1374,541 1377,575 1378,615 1381,637 1385,646 1400,648 1422,650', C.highY, [[1350, 1370, 2]]);
bars(C.highY, [[1102, 523, 646], [1104, 523, 646], [1101, 646, 771], [1105, 646, 771], [1115, 523, 771, 2], [1125, 523, 771], [1126, 646, 771], [1128, 646, 771], [1129, 523, 646], [1138, 523, 646], [1139, 646, 771], [1143, 523, 771], [1145, 646, 771], [1146, 523, 771], [1149, 523, 771], [1153, 523, 646], [1154, 646, 771, 2], [1156, 523, 646, 2], [1160, 523, 771, 2], [1163, 523, 771, 2], [1166, 523, 771], [1180, 523, 646], [1179, 646, 771],
  [1286, 525, 771], [1288, 540, 771], [1287, 646, 771], [1308, 523, 646], [1310, 646, 771], [1313, 646, 771], [1315, 527, 771, 2], [1320, 646, 771], [1321, 523, 771, 2], [1324, 527, 771, 3], [1346, 523, 771], [1348, 646, 771, 2], [1350, 523, 646]]);
bars(C.lowY, [[1177, 525, 771], [1302, 523, 771], [1305, 523, 771], [1306, 523, 646], [1309, 523, 771], [1312, 646, 771], [1313, 523, 646, 2], [1317, 523, 771], [1319, 646, 771], [1322, 527, 771], [1327, 646, 771], [1332, 523, 771], [1334, 523, 646], [1336, 646, 771, 2], [1337, 523, 646], [1348, 523, 646]]);
trace('103,694 108,703 113,728 120,745 127,757 137,764 157,767 175,768 210,769 460,769 494,767 500,766', C.highZ);
trace('500,767 507,770 515,768 530,765 537,758', C.highZ);
trace('652,758 660,765 670,768 690,770 755,770', C.highZ);
trace('784,758 788,767 800,769 857,769 858,771 880,771', C.highZ);
trace('883,523.5 935,524 965,524 975,528 980,538 982,572', C.highZ);
trace('985,615 987,632 990,640 1000,645 1030,647 1295,646.500 1297,645 1300,647 1422,647', C.highZ);
bars(C.highZ, [[754, 524, 564, 2], [756, 524, 564], [754, 758, 771], [880, 523, 564, 2], [883, 523, 564], [901, 523, 564], [928, 523, 646], [929, 646, 771], [931, 523, 771], [932, 523, 646, 2], [934, 523, 771], [879, 758, 771], [883, 758, 771], [982, 540, 572]]);
bars(C.lowZ, [[909, 523, 564], [911, 758, 771]]);

/* cursor, sample markers and cursor handle */
rect(chart, 983, 234, 2, 543, '#636466');
[269, 298, 301.500, 305, 313.500, 341.500, 354, 587, 590, 708].forEach(y =>
  add(chart, 'path', { d: `M977 ${y - 6}l12 12m0-12l-12 12`, stroke: '#000', 'stroke-width': 2 }));
add(chart, 'path', { d: 'M973 780l14.500 17v41h-29v-41z', fill: '#919294', stroke: '#636466', 'stroke-width': 1.5 });

/* time waveform */
const mid = 946;
rect(wave, 52, 857, 1372, 178, '#f5a0a4');
rect(wave, 51, 857, 1, 178, '#7a7a7a');
rect(wave, 1423, 857, 1, 178, '#7a7a7a');
for (let i = 1; i < 16; i++) {
  const x = Math.round(51.500 + i * 89.500) + 0.5;
  path(wave, `M${x} 857V1035`, '#d98389', 1, { 'stroke-dasharray': '2 6' });
}
const ramp = [[52, 3], [75, 4], [114, 4], [130, 7], [150, 8], [165, 12], [180, 15], [190, 22], [200, 27], [1424, 28]];
const peaks = [[199, 33], [218, 40], [248, 47], [262, 45], [278, 50], [298, 58], [328, 68], [335, 55], [353, 60], [373, 52], [390, 49], [413, 43], [430, 43], [441, 45], [464, 56], [480, 47], [489, 50], [500, 53], [514, 50], [531, 47], [543, 44], [557, 54], [563, 50], [587, 60], [597, 68], [612, 58], [624, 48], [636, 48], [655, 62], [662, 58], [682, 50], [691, 52], [700, 68], [741, 62], [752, 55], [759, 84], [768, 60], [782, 50], [798, 56], [815, 48], [832, 54], [849, 62], [866, 50], [884, 60], [905, 48], [921, 50], [937, 58], [955, 48], [973, 64], [981, 50], [1002, 44], [1026, 56], [1045, 46], [1075, 50], [1092, 46], [1108, 62], [1118, 55], [1140, 48], [1160, 50], [1175, 68], [1184, 58], [1205, 46], [1237, 60], [1250, 50], [1261, 56], [1275, 50], [1288, 54], [1308, 62], [1330, 50], [1345, 48], [1360, 65], [1366, 56], [1385, 48], [1398, 56], [1408, 58], [1420, 48]];
const upper = [], lower = [];
let level = 0.5, hold = 0, down = 1;
for (let x = 52; x < 1423; x++) {
  let i = 1;
  while (ramp[i][0] < x) i++;
  const [xa, ha] = ramp[i - 1], [xb, hb] = ramp[i];
  const base = ha + (hb - ha) * (x - xa) / (xb - xa);
  if (hold-- <= 0) {
    level = level * 0.55 + rnd() * 0.45;
    down = 0.84 + rnd() * 0.14;
    hold = rnd() < 0.5 ? 0 : 1;
  }
  let h = base * (0.62 + level * 0.8 + (rnd() < 0.06 ? 0.3 : 0));
  peaks.forEach(([px, ph]) => {
    const d = Math.abs(x - px);
    if (d < 9 && x > 190) h = Math.max(h, ph * Math.exp(-d / 8) * (d < 1 ? 1 : 0.75 + 0.3 * level));
  });
  upper.push(`${x} ${Math.round(mid - h)}H${x + 1}`);
  lower.unshift(`${x + 1} ${Math.round(mid + h * down)}H${x}`);
}
add(wave, 'path', { d: 'M' + upper.join('L') + 'L' + lower.join('L') + 'Z', fill: '#e90b5b', 'shape-rendering': 'crispEdges' });
[724, 738, 751].forEach(x => rect(wave, x, 935, 2, 22, '#f08cab'));

/* time axis */
rect(wave, 52, 1035, 1372, 2, '#636466');
rect(wave, 51, 1035, 8, 3, '#000');
rect(wave, 51, 1035, 1, 8, '#000');
rect(wave, 1416, 1035, 8, 3, '#000');
for (let x = 51.5; x < 1420; x += 17.9) rect(wave, Math.round(x), 1035, 1, 3, '#000');
rect(wave, 58, 1042, 1360, 27, '#bcd3ca');
rect(wave, 58, 1038, 1360, 4, '#f00');
rect(wave, 58, 1038, 2, 31, '#f00');
rect(wave, 1416, 1038, 2, 31, '#f00');
for (let i = 1; i < 16; i++) add(wave, 'text', { x: 51 + i * 89.5, y: 1061, 'text-anchor': 'middle', class: 'time' }, (i * 5).toFixed(1));
add(wave, 'text', { x: 58, y: 1061, 'text-anchor': 'end', class: 'time time-zero' }, '0.0');
})();
```
